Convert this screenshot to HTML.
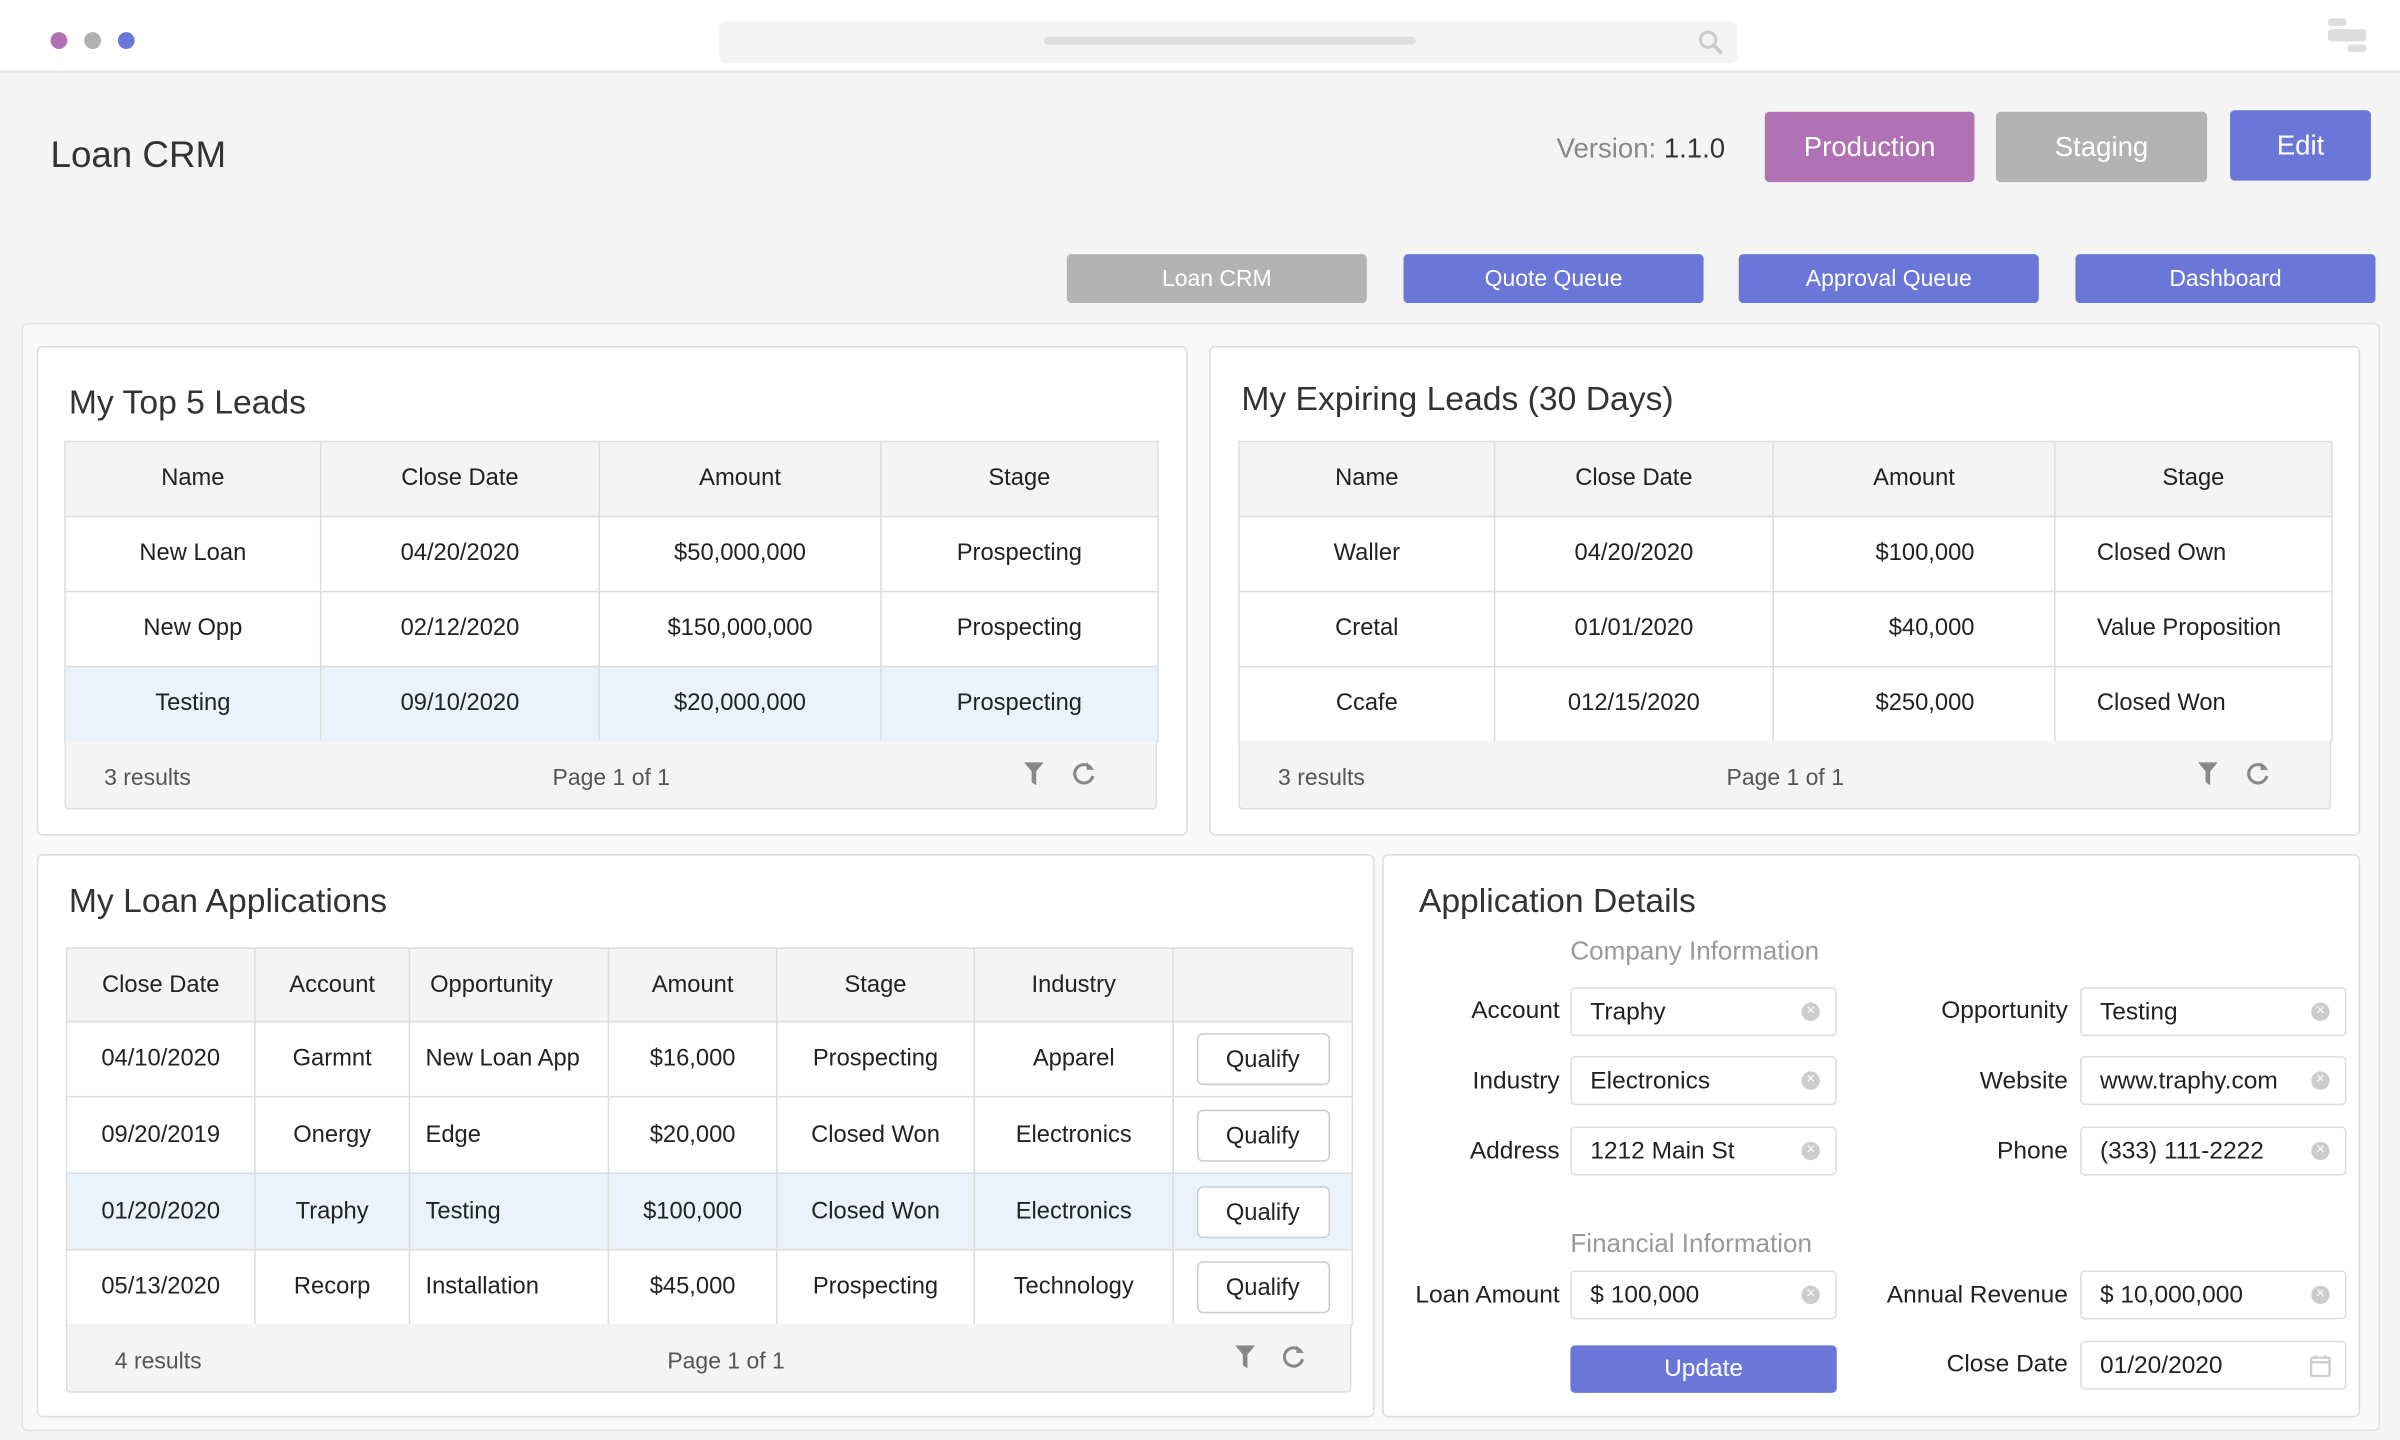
<!DOCTYPE html>
<html><head><meta charset="utf-8"><style>
html,body{margin:0;padding:0;width:2400px;height:1440px;overflow:hidden;background:#f4f4f4}
#s{position:absolute;left:0;top:0;width:1568px;height:941px;transform:scale(1.5306);transform-origin:0 0;font-family:"Liberation Sans",sans-serif;color:#2a2a2a;background:#f4f4f4}
.a{position:absolute}
.btn{position:absolute;color:#fff;display:flex;align-items:center;justify-content:center;border-radius:3px}
.card{position:absolute;background:#fff;border:1px solid #ddd;border-radius:4px;box-sizing:border-box}
.title{position:absolute;font-size:22px;color:#333;font-weight:300}
table{position:absolute;border-collapse:collapse;font-size:15.5px;table-layout:fixed;color:#222}
td{border:1px solid #ddd;text-align:center;padding:0;white-space:nowrap}
tr.h td{background:#f4f4f4}
tr.hl td{background:#eaf2fb}
.foot{position:absolute;background:#f4f4f4;border:1px solid #ddd;border-top:none;box-sizing:border-box;font-size:15px;color:#555;border-radius:0 0 3px 3px}
.lbl{position:absolute;font-size:16px;text-align:right;width:150px;color:#222}
.inp{position:absolute;width:174px;height:32px;border:1px solid #ddd;border-radius:3px;box-sizing:border-box;background:#fff;font-size:16px;padding-left:12px;line-height:31px;color:#222}
.x{position:absolute;right:10px;top:9px;width:12px;height:12px;border-radius:50%;background:#ccc;color:#fff;font-size:10px;line-height:12px;text-align:center}
.q{display:inline-block;width:87px;height:34px;line-height:34px;border:1px solid #ccc;border-radius:4px;box-sizing:border-box}
.ic{position:absolute;top:14px}
</style></head><body><div id="s">
<div class="a" style="left:0;top:0;width:1568px;height:46px;background:#fff;border-bottom:2px solid #e6e6e6"></div>
<div class="a" style="left:33px;top:21px;width:11px;height:11px;border-radius:50%;background:#b072b4"></div>
<div class="a" style="left:55px;top:21px;width:11px;height:11px;border-radius:50%;background:#b0b0b0"></div>
<div class="a" style="left:77px;top:21px;width:11px;height:11px;border-radius:50%;background:#6a76d8"></div>
<div class="a" style="left:470px;top:14px;width:665px;height:27px;background:#f3f3f3;border-radius:4px"></div>
<div class="a" style="left:682px;top:24px;width:243px;height:5px;background:#ddd;border-radius:3px"></div>
<svg class="a" style="left:1109px;top:19px" width="18" height="18"><circle cx="7" cy="7" r="5" fill="none" stroke="#ccc" stroke-width="2"/><line x1="11" y1="11" x2="16" y2="16" stroke="#ccc" stroke-width="2.5"/></svg>
<div class="a" style="left:1521px;top:12px;width:12px;height:5px;background:#ddd;border-radius:2px"></div>
<div class="a" style="left:1521px;top:19px;width:25px;height:8px;background:#ddd;border-radius:2px"></div>
<div class="a" style="left:1534px;top:29px;width:12px;height:5px;background:#ddd;border-radius:2px"></div>

<div class="a" style="left:33px;top:88px;font-size:24px;color:#333">Loan CRM</div>
<div class="a" style="left:1017px;top:87px;font-size:18px;color:#888">Version: <span style="color:#333">1.1.0</span></div>
<div class="btn" style="left:1153px;top:73px;width:137px;height:46px;background:#b072b4;font-size:18px">Production</div>
<div class="btn" style="left:1304px;top:73px;width:138px;height:46px;background:#b3b3b3;font-size:18px">Staging</div>
<div class="btn" style="left:1457px;top:72px;width:92px;height:46px;background:#6a76d8;font-size:18px">Edit</div>
<div class="btn" style="left:697px;top:166px;width:196px;height:32px;background:#b3b3b3;font-size:15px">Loan CRM</div>
<div class="btn" style="left:917px;top:166px;width:196px;height:32px;background:#6a76d8;font-size:15px">Quote Queue</div>
<div class="btn" style="left:1136px;top:166px;width:196px;height:32px;background:#6a76d8;font-size:15px">Approval Queue</div>
<div class="btn" style="left:1356px;top:166px;width:196px;height:32px;background:#6a76d8;font-size:15px">Dashboard</div>

<div class="a" style="left:14px;top:211px;width:1541px;height:724px;background:#f9f9f9;border:1px solid #e3e3e3;border-radius:4px;box-sizing:border-box"></div>

<div class="card" style="left:24px;top:226px;width:752px;height:320px"></div>
<div class="title" style="left:45px;top:250px">My Top 5 Leads</div>
<table style="left:42px;top:288px;width:714px">
<colgroup><col style="width:167px"><col style="width:182px"><col style="width:184px"><col style="width:181px"></colgroup>
<tr class="h" style="height:49px"><td>Name</td><td>Close Date</td><td>Amount</td><td>Stage</td></tr>
<tr style="height:49px"><td>New Loan</td><td>04/20/2020</td><td>$50,000,000</td><td>Prospecting</td></tr>
<tr style="height:49px"><td>New Opp</td><td>02/12/2020</td><td>$150,000,000</td><td>Prospecting</td></tr>
<tr class="hl" style="height:49px"><td>Testing</td><td>09/10/2020</td><td>$20,000,000</td><td>Prospecting</td></tr>
</table>
<div class="foot" style="left:42px;top:484px;width:714px;height:45px"><span class="a" style="left:25px;top:16px">3 results</span><span class="a" style="left:318px;top:16px">Page 1 of 1</span>
<svg class="ic" style="left:626px" width="13" height="15"><path d="M0 0H13L8 6V15L5 13V6Z" fill="#888"/></svg>
<svg class="ic" style="left:658px" width="15" height="15"><path d="M12 4A6 6 0 1 0 13 9" fill="none" stroke="#888" stroke-width="2"/><path d="M9 0L14 5L9 5Z" fill="#888"/></svg></div>

<div class="card" style="left:790px;top:226px;width:752px;height:320px"></div>
<div class="title" style="left:811px;top:248px">My Expiring Leads (30 Days)</div>
<table style="left:809px;top:288px;width:714px">
<colgroup><col style="width:167px"><col style="width:182px"><col style="width:184px"><col style="width:181px"></colgroup>
<tr class="h" style="height:49px"><td>Name</td><td>Close Date</td><td>Amount</td><td>Stage</td></tr>
<tr style="height:49px"><td>Waller</td><td>04/20/2020</td><td style="text-align:right;padding-right:52px">$100,000</td><td style="text-align:left;padding-left:27px">Closed Own</td></tr>
<tr style="height:49px"><td>Cretal</td><td>01/01/2020</td><td style="text-align:right;padding-right:52px">$40,000</td><td style="text-align:left;padding-left:27px">Value Proposition</td></tr>
<tr style="height:49px"><td>Ccafe</td><td>012/15/2020</td><td style="text-align:right;padding-right:52px">$250,000</td><td style="text-align:left;padding-left:27px">Closed Won</td></tr>
</table>
<div class="foot" style="left:809px;top:484px;width:714px;height:45px"><span class="a" style="left:25px;top:16px">3 results</span><span class="a" style="left:318px;top:16px">Page 1 of 1</span>
<svg class="ic" style="left:626px" width="13" height="15"><path d="M0 0H13L8 6V15L5 13V6Z" fill="#888"/></svg>
<svg class="ic" style="left:658px" width="15" height="15"><path d="M12 4A6 6 0 1 0 13 9" fill="none" stroke="#888" stroke-width="2"/><path d="M9 0L14 5L9 5Z" fill="#888"/></svg></div>

<div class="card" style="left:24px;top:558px;width:874px;height:368px"></div>
<div class="title" style="left:45px;top:576px">My Loan Applications</div>
<table style="left:43px;top:619px;width:840px">
<colgroup><col style="width:123px"><col style="width:101px"><col style="width:130px"><col style="width:110px"><col style="width:129px"><col style="width:130px"><col style="width:117px"></colgroup>
<tr class="h" style="height:48px"><td>Close Date</td><td>Account</td><td style="text-align:left;padding-left:13px">Opportunity</td><td>Amount</td><td>Stage</td><td>Industry</td><td></td></tr>
<tr style="height:49px"><td>04/10/2020</td><td>Garmnt</td><td style="text-align:left;padding-left:10px">New Loan App</td><td>$16,000</td><td>Prospecting</td><td>Apparel</td><td><span class="q">Qualify</span></td></tr>
<tr style="height:50px"><td>09/20/2019</td><td>Onergy</td><td style="text-align:left;padding-left:10px">Edge</td><td>$20,000</td><td>Closed Won</td><td>Electronics</td><td><span class="q">Qualify</span></td></tr>
<tr class="hl" style="height:50px"><td>01/20/2020</td><td>Traphy</td><td style="text-align:left;padding-left:10px">Testing</td><td>$100,000</td><td>Closed Won</td><td>Electronics</td><td><span class="q" style="background:#fff">Qualify</span></td></tr>
<tr style="height:49px"><td>05/13/2020</td><td>Recorp</td><td style="text-align:left;padding-left:10px">Installation</td><td>$45,000</td><td>Prospecting</td><td>Technology</td><td><span class="q">Qualify</span></td></tr>
</table>
<div class="foot" style="left:43px;top:865px;width:840px;height:45px"><span class="a" style="left:31px;top:16px">4 results</span><span class="a" style="left:392px;top:16px">Page 1 of 1</span>
<svg class="ic" style="left:763px" width="13" height="15"><path d="M0 0H13L8 6V15L5 13V6Z" fill="#888"/></svg>
<svg class="ic" style="left:794px" width="15" height="15"><path d="M12 4A6 6 0 1 0 13 9" fill="none" stroke="#888" stroke-width="2"/><path d="M9 0L14 5L9 5Z" fill="#888"/></svg></div>

<div class="card" style="left:903px;top:558px;width:639px;height:368px"></div>
<div class="title" style="left:927px;top:576px">Application Details</div>
<div class="a" style="left:1026px;top:612px;font-size:17px;color:#999">Company Information</div>
<div class="a" style="left:1026px;top:803px;font-size:17px;color:#999">Financial Information</div>

<div class="lbl" style="left:869px;top:652px">Account</div><div class="inp" style="left:1026px;top:645px">Traphy<span class="x">×</span></div>
<div class="lbl" style="left:869px;top:698px">Industry</div><div class="inp" style="left:1026px;top:690px">Electronics<span class="x">×</span></div>
<div class="lbl" style="left:869px;top:744px">Address</div><div class="inp" style="left:1026px;top:736px">1212 Main St<span class="x">×</span></div>
<div class="lbl" style="left:869px;top:838px">Loan Amount</div><div class="inp" style="left:1026px;top:830px">$ 100,000<span class="x">×</span></div>
<div class="btn" style="left:1026px;top:879px;width:174px;height:31px;background:#6a76d8;font-size:16px">Update</div>

<div class="lbl" style="left:1201px;top:652px">Opportunity</div><div class="inp" style="left:1359px;top:645px">Testing<span class="x">×</span></div>
<div class="lbl" style="left:1201px;top:698px">Website</div><div class="inp" style="left:1359px;top:690px">www.traphy.com<span class="x">×</span></div>
<div class="lbl" style="left:1201px;top:744px">Phone</div><div class="inp" style="left:1359px;top:736px">(333) 111-2222<span class="x">×</span></div>
<div class="lbl" style="left:1201px;top:838px">Annual Revenue</div><div class="inp" style="left:1359px;top:830px">$ 10,000,000<span class="x">×</span></div>
<div class="lbl" style="left:1201px;top:883px">Close Date</div><div class="inp" style="left:1359px;top:876px">01/20/2020<svg class="a" style="right:9px;top:8px" width="14" height="15"><rect x="1" y="2" width="12" height="12" rx="1" fill="none" stroke="#ccc" stroke-width="1.5"/><line x1="1" y1="5" x2="13" y2="5" stroke="#ccc" stroke-width="1.5"/><line x1="4" y1="0" x2="4" y2="3" stroke="#ccc"/><line x1="10" y1="0" x2="10" y2="3" stroke="#ccc"/></svg></div>
</div></body></html>
